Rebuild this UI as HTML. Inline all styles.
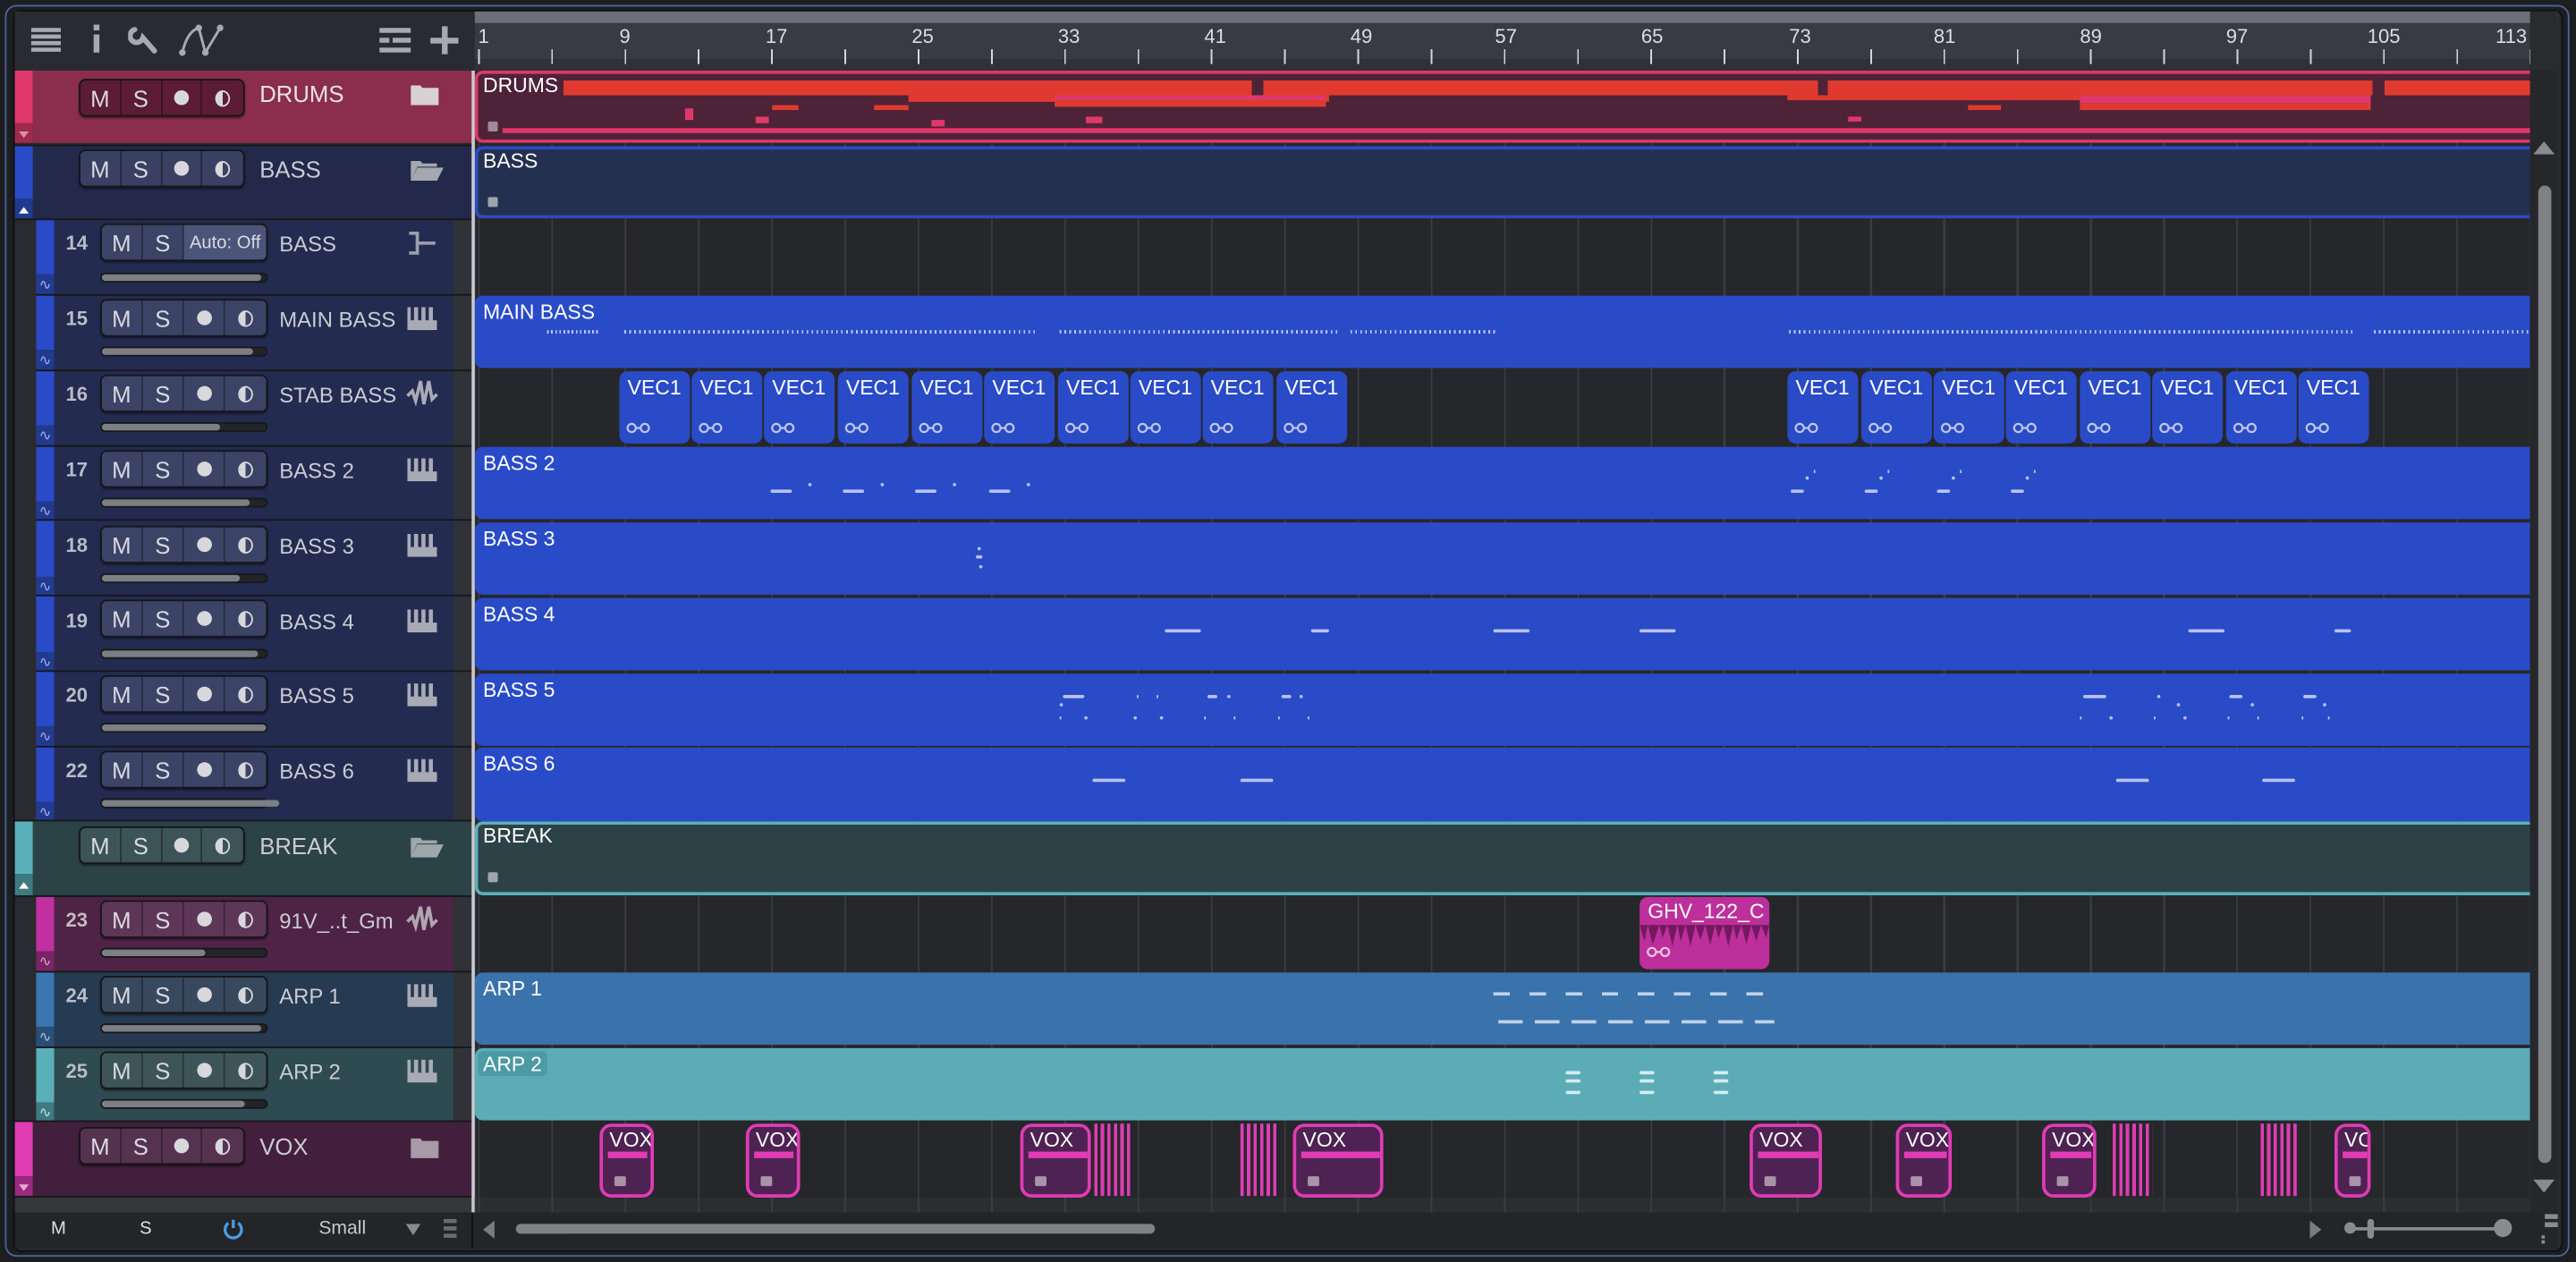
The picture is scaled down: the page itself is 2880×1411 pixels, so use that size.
<!DOCTYPE html>
<html><head><meta charset="utf-8">
<style>
*{box-sizing:border-box;margin:0;padding:0}
html,body{width:2880px;height:1410px;overflow:hidden;background:#1d1e21}
#root{position:absolute;left:0;top:0;width:1568px;height:768px;transform:scale(1.83674);transform-origin:0 0;font-family:"Liberation Sans",Arial,sans-serif;background:#1d1e21;overflow:hidden}
.a{position:absolute}
.frame{left:3px;top:3px;width:1561px;height:762px;border:1.5px solid #4a6796;border-radius:7px}
.panel{left:8px;top:6px;width:1552px;height:756px;background:#2a2b2f;border:1px solid #0e0f11;border-radius:5px}
.txt{color:#c9ccd3;white-space:nowrap}
.cn{font-size:13px!important}
.bg{position:absolute;height:23px;border:1px solid #15161a;border-radius:4px;display:flex;overflow:hidden;box-shadow:0 1px 1px rgba(0,0,0,.4)}
.bg i{font-style:normal;width:25px;height:100%;display:flex;align-items:center;justify-content:center;color:#d8dae0;font-size:14px;border-right:1px solid rgba(0,0,0,.35)}
.bg i:last-child{border-right:none}
.rec{width:9px;height:9px;border-radius:50%;background:#d8d8dc}
.mon{width:9px;height:10px;border-radius:50%;background:linear-gradient(90deg,#d8d8dc 50%,transparent 50%);border:1.2px solid #d8d8dc}
.fad{position:absolute;height:6px;width:102px;background:#222428;border-radius:3px;border:1px solid #17181b}
.fad b{display:block;height:100%;background:#7c8085;border-radius:3px}
.clip{position:absolute;border-radius:5px;overflow:hidden}
.ct{position:absolute;left:5px;top:3px;color:#fff;font-size:12.5px;white-space:nowrap}
.n{position:absolute;background:#b8c2ec;height:2px;border-radius:1px}
.grid{left:289px;top:43px;width:1251px;height:695px;background-color:#26272b;background-image:repeating-linear-gradient(90deg,#3b3c41 0 1px,transparent 1px 44.6px);background-position:2px 0}
.vec{position:absolute;width:43px;height:44px;background:#2a4bc8;border-radius:5px}
.vec span{position:absolute;left:5px;top:3px;color:#fff;font-size:12.5px}
.vec svg{position:absolute;left:4px;top:31px}
.vox{position:absolute;height:45px;border:2px solid #e03cb4;border-radius:7px;background:#4e2252;overflow:hidden}
.vox span{position:absolute;left:4px;top:1px;color:#fff;font-size:12.5px}
.vox em{position:absolute;left:3px;top:15px;height:4px;background:#e03cb4}
.vox u{position:absolute;left:7px;bottom:5px;width:7px;height:6px;background:#a893a8;border-radius:1px}
.str{position:absolute;height:44px;background:repeating-linear-gradient(90deg,#e03cb4 0 2px,transparent 2px 4px)}
</style></head><body><div id="root">
<div class="a frame"></div>
<div class="a panel"></div>

<!-- toolbar -->
<div class="a" style="left:9px;top:7px;width:278px;height:36px;background:#2a2b30"></div>
<svg class="a" style="left:18px;top:16px" width="22" height="16"><g fill="#a8a9ae"><rect x="1" y="1" width="18" height="2.5"/><rect x="1" y="5" width="18" height="2.5"/><rect x="1" y="9" width="18" height="2.5"/><rect x="1" y="13" width="18" height="2.5"/></g></svg>
<svg class="a" style="left:54px;top:13px" width="10" height="20"><g fill="#a8a9ae"><rect x="3" y="2" width="3.5" height="3.5"/><rect x="3" y="8" width="3.5" height="11"/></g></svg>
<svg class="a" style="left:78px;top:14px" width="22" height="20"><path d="M4 4 a4 4 0 1 0 5 5 L16 17" stroke="#a8a9ae" stroke-width="3.2" fill="none" stroke-linecap="round"/></svg>
<svg class="a" style="left:108px;top:13px" width="30" height="22"><path d="M3 19 Q6 6 13 4 L17 19 L26 4" stroke="#a8a9ae" stroke-width="1.6" fill="none"/><g fill="#a8a9ae"><circle cx="3" cy="19" r="2"/><circle cx="13" cy="4" r="2"/><circle cx="17" cy="19" r="2"/><circle cx="26" cy="4" r="2"/></g></svg>
<svg class="a" style="left:230px;top:16px" width="22" height="16"><g fill="#a8a9ae"><rect x="1" y="1" width="19" height="3"/><rect x="1" y="7" width="6" height="3"/><rect x="9" y="7" width="11" height="3"/><rect x="1" y="13" width="19" height="3"/></g></svg>
<svg class="a" style="left:261px;top:15px" width="20" height="20"><g fill="#a8a9ae"><rect x="8" y="1" width="3.5" height="17"/><rect x="1" y="8" width="17" height="3.5"/></g></svg>

<!-- ruler -->
<div class="a" style="left:289px;top:7px;width:1251px;height:36px;background:#393b43"></div>
<div class="a" style="left:289px;top:7px;width:1268px;height:7px;background:#6c6f77"></div>
<div class="a" style="left:289px;top:36px;width:1251px;height:7px;background:#2f3137"></div>
<div class="a" style="left:291px;top:30px;width:1251px;height:9px;background-image:repeating-linear-gradient(90deg,#d5d6da 0 1px,transparent 1px 44.6px);background-position:0 0"></div>
<div class="a txt" style="left:0;top:15px;font-size:12px;color:#dcdde0;width:1568px;height:16px">
<span class="a" style="left:291px">1</span><span class="a" style="left:377px">9</span><span class="a" style="left:466px">17</span><span class="a" style="left:555px">25</span><span class="a" style="left:644px">33</span><span class="a" style="left:733px">41</span><span class="a" style="left:822px">49</span><span class="a" style="left:910px">57</span><span class="a" style="left:999px">65</span><span class="a" style="left:1089px">73</span><span class="a" style="left:1177px">81</span><span class="a" style="left:1266px">89</span><span class="a" style="left:1355px">97</span><span class="a" style="left:1441px">105</span><span class="a" style="left:1519px">113</span></div>
<div class="a" style="left:1540px;top:7px;width:17px;height:36px;background:#2a2b2f"></div>

<!-- header column base -->
<div class="a" style="left:9px;top:43px;width:279px;height:695px;background:#2a2b30"></div>
<div class="a grid"></div>
<div class="a" style="left:287px;top:43px;width:2px;height:695px;background:#c9cbd0"></div>

<!-- ROW 0 DRUMS folder -->
<div class="a" style="left:9px;top:43px;width:11px;height:32px;background:#e0386a"></div>
<div class="a" style="left:9px;top:75px;width:11px;height:12px;background:#9e2a4d"><svg width="11" height="12"><path d="M2.5 4 h6 l-3 4z" fill="#d890a8"/></svg></div>
<div class="a" style="left:20px;top:43px;width:267px;height:44px;background:#8b2d4c"></div>
<div class="bg" style="left:48px;top:48px;width:101px;background:#5b1c34"><i>M</i><i>S</i><i><b class="rec"></b></i><i><b class="mon"></b></i></div>
<div class="a txt" style="left:158px;top:49px;font-size:14px;color:#e8e3e6">DRUMS</div>
<svg class="a" style="left:250px;top:51px" width="17" height="13"><path d="M0 1 h6 l1 1.5 h10 v11 h-17z" fill="#d8d0d4"/></svg>
<div class="clip" style="left:289px;top:43px;width:1251px;height:44px;background:#4e2338;border:2px solid #e0386a;border-right:none;border-radius:5px 0 0 5px"></div>
<div class="a ct" style="left:294px;top:45px">DRUMS</div>
<div class="a" style="left:343px;top:49px;width:1197px;height:9px;background:linear-gradient(90deg,#e03a30 0 35%,#4e2338 35% 35.6%,#e03a30 35.6% 63.8%,#4e2338 63.8% 64.3%,#e03a30 64.3% 92%,#4e2338 92% 92.6%,#e03a30 92.6%)"></div>
<div class="a" style="left:553px;top:58px;width:256px;height:4px;background:#e03a30"></div>
<div class="a" style="left:642px;top:58px;width:165px;height:3px;background:#e0386a"></div>
<div class="a" style="left:642px;top:61px;width:165px;height:4px;background:#e03a30"></div>
<div class="a" style="left:1088px;top:58px;width:178px;height:3px;background:#e03a30"></div>
<div class="a" style="left:1266px;top:58px;width:177px;height:5px;background:#e0386a"></div>
<div class="a" style="left:1266px;top:63px;width:177px;height:4px;background:#e03a30"></div>
<div class="a" style="left:470px;top:64px;width:16px;height:3px;background:#e03a30"></div>
<div class="a" style="left:532px;top:64px;width:21px;height:3px;background:#e03a30"></div>
<div class="a" style="left:1198px;top:64px;width:20px;height:3px;background:#e03a30"></div>
<div class="a" style="left:417px;top:66px;width:5px;height:7px;background:#e0386a"></div>
<div class="a" style="left:460px;top:71px;width:8px;height:4px;background:#e0386a"></div>
<div class="a" style="left:567px;top:73px;width:8px;height:4px;background:#e0386a"></div>
<div class="a" style="left:661px;top:71px;width:10px;height:4px;background:#e0386a"></div>
<div class="a" style="left:1125px;top:71px;width:8px;height:3px;background:#e0386a"></div>
<div class="a" style="left:306px;top:78px;width:1234px;height:3px;background:#e0386a"></div>
<div class="a" style="left:297px;top:74px;width:6px;height:6px;background:#a08a95;border-radius:1px"></div>

<!-- ROW 1 BASS folder -->
<div class="a" style="left:9px;top:89px;width:11px;height:32px;background:#2a4bc8"></div>
<div class="a" style="left:9px;top:121px;width:11px;height:12px;background:#223a8e"><svg width="11" height="12"><path d="M2.5 8 h6 l-3 -4z" fill="#fff"/></svg></div>
<div class="a" style="left:20px;top:89px;width:267px;height:44px;background:#22294b"></div>
<div class="bg" style="left:48px;top:91px;width:101px;background:#394061"><i>M</i><i>S</i><i><b class="rec"></b></i><i><b class="mon"></b></i></div>
<div class="a txt" style="left:158px;top:95px;font-size:14px">BASS</div>
<svg class="a" style="left:250px;top:97px" width="20" height="13"><path d="M0 1 h6 l1 1.5 h9 v2 h-12 l-4 8.5z M4 5 h16 l-4 8 h-16z" fill="#a5a8b0"/></svg>
<div class="clip" style="left:289px;top:89px;width:1251px;height:44px;background:#24304f;border:2px solid #2a4bc8;border-right:none;border-radius:5px 0 0 5px"></div>
<div class="a ct" style="left:294px;top:91px">BASS</div>
<div class="a" style="left:297px;top:120px;width:6px;height:6px;background:#9fa3ad;border-radius:1px"></div>

<!-- ROW 2 (14 BASS) -->
<div class="a" style="left:22px;top:134px;width:11px;height:33px;background:#2a4bc8"></div>
<div class="a" style="left:22px;top:167px;width:11px;height:12px;background:#223a8e;color:#9fb0f0;font-size:9px;line-height:12px;text-align:center">∿</div>
<div class="a" style="left:33px;top:134px;width:243px;height:45px;background:#232b50"></div>
<div class="a" style="left:276px;top:134px;width:11px;height:45px;background:#303237"></div>
<div class="a txt" style="left:40px;top:141px;font-size:12px;font-weight:bold;color:#b9bcc7">14</div>
<div class="bg" style="left:61px;top:136px;width:102px;background:#3b4466"><i>M</i><i>S</i><i style="width:50px;background:#4b5479;font-size:11px">Auto: Off</i></div>
<div class="a txt cn" style="left:170px;top:141px">BASS</div>
<svg class="a" style="left:248px;top:140px" width="18" height="16"><g fill="#9a9dab"><rect x="1" y="1" width="6" height="2"/><rect x="1" y="13" width="6" height="2"/><rect x="5" y="1" width="2" height="14"/><rect x="5" y="7" width="12" height="2"/></g></svg>
<div class="fad" style="left:61px;top:166px"><b style="width:97px"></b></div>

<!-- ROW 3 (15 MAIN BASS) -->
<div class="a" style="left:22px;top:180px;width:11px;height:33px;background:#2a4bc8"></div>
<div class="a" style="left:22px;top:213px;width:11px;height:12px;background:#223a8e;color:#9fb0f0;font-size:9px;line-height:12px;text-align:center">∿</div>
<div class="a" style="left:33px;top:180px;width:243px;height:45px;background:#232b50"></div>
<div class="a" style="left:276px;top:180px;width:11px;height:45px;background:#303237"></div>
<div class="a txt" style="left:40px;top:187px;font-size:12px;font-weight:bold;color:#b9bcc7">15</div>
<div class="bg" style="left:61px;top:182px;width:102px;background:#3b4466"><i>M</i><i>S</i><i><b class="rec"></b></i><i><b class="mon"></b></i></div>
<div class="a txt cn" style="left:170px;top:187px">MAIN BASS</div>
<svg class="a" style="left:248px;top:187px" width="18" height="14"><path d="M0 0 h2 v8 h2 v-8 h2.5 v8 h2 v-8 h2.5 v8 h2 v-8 h2.5 v8 h2.5 v-8 h0 v14 h-18z" fill="#a8abb5"/></svg>
<div class="fad" style="left:61px;top:211px"><b style="width:92px"></b></div>
<div class="clip" style="left:289px;top:180px;width:1251px;height:44px;background:#2a4bc8;border-radius:5px 0 0 5px"><div class="ct">MAIN BASS</div></div>
<div class="a" style="left:333px;top:201px;height:2px;width:32px;background:repeating-linear-gradient(90deg,#c6cff0 0 1px,transparent 1px 2.5px)"></div>
<div class="a" style="left:380px;top:201px;height:2px;width:252px;background:repeating-linear-gradient(90deg,#c6cff0 0 1px,transparent 1px 3px)"></div>
<div class="a" style="left:645px;top:201px;height:2px;width:170px;background:repeating-linear-gradient(90deg,#c6cff0 0 1px,transparent 1px 3px)"></div>
<div class="a" style="left:822px;top:201px;height:2px;width:88px;background:repeating-linear-gradient(90deg,#c6cff0 0 1px,transparent 1px 3px)"></div>
<div class="a" style="left:1089px;top:201px;height:2px;width:344px;background:repeating-linear-gradient(90deg,#c6cff0 0 1px,transparent 1px 3px)"></div>
<div class="a" style="left:1445px;top:201px;height:2px;width:95px;background:repeating-linear-gradient(90deg,#c6cff0 0 1px,transparent 1px 3px)"></div>

<!-- ROW 4 (16 STAB BASS) -->
<div class="a" style="left:22px;top:226px;width:11px;height:33px;background:#2a4bc8"></div>
<div class="a" style="left:22px;top:259px;width:11px;height:12px;background:#223a8e;color:#9fb0f0;font-size:9px;line-height:12px;text-align:center">∿</div>
<div class="a" style="left:33px;top:226px;width:243px;height:45px;background:#232b50"></div>
<div class="a" style="left:276px;top:226px;width:11px;height:45px;background:#303237"></div>
<div class="a txt" style="left:40px;top:233px;font-size:12px;font-weight:bold;color:#b9bcc7">16</div>
<div class="bg" style="left:61px;top:228px;width:102px;background:#3b4466"><i>M</i><i>S</i><i><b class="rec"></b></i><i><b class="mon"></b></i></div>
<div class="a txt cn" style="left:170px;top:233px">STAB BASS</div>
<svg class="a" style="left:247px;top:230px" width="20" height="18"><path d="M1 11 L4 8 L6 14 L9 2 L11 16 L14 2 L16 13 L19 10" stroke="#a8abb5" stroke-width="2" fill="none"/></svg>
<div class="fad" style="left:61px;top:257px"><b style="width:72px"></b></div>
<div class="vec" style="left:377px;top:226px"><span>VEC1</span><svg width="16" height="7"><g stroke="#bfc7e8" stroke-width="1.2" fill="none"><circle cx="3.5" cy="3.5" r="2.5"/><circle cx="11.5" cy="3.5" r="2.5"/><path d="M6 3.5h3"/></g></svg></div>
<div class="vec" style="left:421px;top:226px"><span>VEC1</span><svg width="16" height="7"><g stroke="#bfc7e8" stroke-width="1.2" fill="none"><circle cx="3.5" cy="3.5" r="2.5"/><circle cx="11.5" cy="3.5" r="2.5"/><path d="M6 3.5h3"/></g></svg></div>
<div class="vec" style="left:465px;top:226px"><span>VEC1</span><svg width="16" height="7"><g stroke="#bfc7e8" stroke-width="1.2" fill="none"><circle cx="3.5" cy="3.5" r="2.5"/><circle cx="11.5" cy="3.5" r="2.5"/><path d="M6 3.5h3"/></g></svg></div>
<div class="vec" style="left:510px;top:226px"><span>VEC1</span><svg width="16" height="7"><g stroke="#bfc7e8" stroke-width="1.2" fill="none"><circle cx="3.5" cy="3.5" r="2.5"/><circle cx="11.5" cy="3.5" r="2.5"/><path d="M6 3.5h3"/></g></svg></div>
<div class="vec" style="left:555px;top:226px"><span>VEC1</span><svg width="16" height="7"><g stroke="#bfc7e8" stroke-width="1.2" fill="none"><circle cx="3.5" cy="3.5" r="2.5"/><circle cx="11.5" cy="3.5" r="2.5"/><path d="M6 3.5h3"/></g></svg></div>
<div class="vec" style="left:599px;top:226px"><span>VEC1</span><svg width="16" height="7"><g stroke="#bfc7e8" stroke-width="1.2" fill="none"><circle cx="3.5" cy="3.5" r="2.5"/><circle cx="11.5" cy="3.5" r="2.5"/><path d="M6 3.5h3"/></g></svg></div>
<div class="vec" style="left:644px;top:226px"><span>VEC1</span><svg width="16" height="7"><g stroke="#bfc7e8" stroke-width="1.2" fill="none"><circle cx="3.5" cy="3.5" r="2.5"/><circle cx="11.5" cy="3.5" r="2.5"/><path d="M6 3.5h3"/></g></svg></div>
<div class="vec" style="left:688px;top:226px"><span>VEC1</span><svg width="16" height="7"><g stroke="#bfc7e8" stroke-width="1.2" fill="none"><circle cx="3.5" cy="3.5" r="2.5"/><circle cx="11.5" cy="3.5" r="2.5"/><path d="M6 3.5h3"/></g></svg></div>
<div class="vec" style="left:732px;top:226px"><span>VEC1</span><svg width="16" height="7"><g stroke="#bfc7e8" stroke-width="1.2" fill="none"><circle cx="3.5" cy="3.5" r="2.5"/><circle cx="11.5" cy="3.5" r="2.5"/><path d="M6 3.5h3"/></g></svg></div>
<div class="vec" style="left:777px;top:226px"><span>VEC1</span><svg width="16" height="7"><g stroke="#bfc7e8" stroke-width="1.2" fill="none"><circle cx="3.5" cy="3.5" r="2.5"/><circle cx="11.5" cy="3.5" r="2.5"/><path d="M6 3.5h3"/></g></svg></div>
<div class="vec" style="left:1088px;top:226px"><span>VEC1</span><svg width="16" height="7"><g stroke="#bfc7e8" stroke-width="1.2" fill="none"><circle cx="3.5" cy="3.5" r="2.5"/><circle cx="11.5" cy="3.5" r="2.5"/><path d="M6 3.5h3"/></g></svg></div>
<div class="vec" style="left:1133px;top:226px"><span>VEC1</span><svg width="16" height="7"><g stroke="#bfc7e8" stroke-width="1.2" fill="none"><circle cx="3.5" cy="3.5" r="2.5"/><circle cx="11.5" cy="3.5" r="2.5"/><path d="M6 3.5h3"/></g></svg></div>
<div class="vec" style="left:1177px;top:226px"><span>VEC1</span><svg width="16" height="7"><g stroke="#bfc7e8" stroke-width="1.2" fill="none"><circle cx="3.5" cy="3.5" r="2.5"/><circle cx="11.5" cy="3.5" r="2.5"/><path d="M6 3.5h3"/></g></svg></div>
<div class="vec" style="left:1221px;top:226px"><span>VEC1</span><svg width="16" height="7"><g stroke="#bfc7e8" stroke-width="1.2" fill="none"><circle cx="3.5" cy="3.5" r="2.5"/><circle cx="11.5" cy="3.5" r="2.5"/><path d="M6 3.5h3"/></g></svg></div>
<div class="vec" style="left:1266px;top:226px"><span>VEC1</span><svg width="16" height="7"><g stroke="#bfc7e8" stroke-width="1.2" fill="none"><circle cx="3.5" cy="3.5" r="2.5"/><circle cx="11.5" cy="3.5" r="2.5"/><path d="M6 3.5h3"/></g></svg></div>
<div class="vec" style="left:1310px;top:226px"><span>VEC1</span><svg width="16" height="7"><g stroke="#bfc7e8" stroke-width="1.2" fill="none"><circle cx="3.5" cy="3.5" r="2.5"/><circle cx="11.5" cy="3.5" r="2.5"/><path d="M6 3.5h3"/></g></svg></div>
<div class="vec" style="left:1355px;top:226px"><span>VEC1</span><svg width="16" height="7"><g stroke="#bfc7e8" stroke-width="1.2" fill="none"><circle cx="3.5" cy="3.5" r="2.5"/><circle cx="11.5" cy="3.5" r="2.5"/><path d="M6 3.5h3"/></g></svg></div>
<div class="vec" style="left:1399px;top:226px"><span>VEC1</span><svg width="16" height="7"><g stroke="#bfc7e8" stroke-width="1.2" fill="none"><circle cx="3.5" cy="3.5" r="2.5"/><circle cx="11.5" cy="3.5" r="2.5"/><path d="M6 3.5h3"/></g></svg></div>

<!-- ROWS 5-9 (BASS 2..6) -->
<div class="a" style="left:22px;top:272px;width:11px;height:228px;background:#2a4bc8"></div>
<div class="a" style="left:22px;top:305px;width:11px;height:12px;background:#223a8e;color:#9fb0f0;font-size:9px;line-height:12px;text-align:center">∿</div>
<div class="a" style="left:22px;top:351px;width:11px;height:12px;background:#223a8e;color:#9fb0f0;font-size:9px;line-height:12px;text-align:center">∿</div>
<div class="a" style="left:22px;top:397px;width:11px;height:12px;background:#223a8e;color:#9fb0f0;font-size:9px;line-height:12px;text-align:center">∿</div>
<div class="a" style="left:22px;top:442px;width:11px;height:12px;background:#223a8e;color:#9fb0f0;font-size:9px;line-height:12px;text-align:center">∿</div>
<div class="a" style="left:22px;top:488px;width:11px;height:12px;background:#223a8e;color:#9fb0f0;font-size:9px;line-height:12px;text-align:center">∿</div>
<div class="a" style="left:33px;top:272px;width:243px;height:228px;background:#232b50"></div>
<div class="a" style="left:276px;top:272px;width:11px;height:228px;background:#303237"></div>
<div class="a" style="left:22px;top:316px;width:265px;height:1px;background:#16171a"></div>
<div class="a" style="left:22px;top:362px;width:265px;height:1px;background:#16171a"></div>
<div class="a" style="left:22px;top:408px;width:265px;height:1px;background:#16171a"></div>
<div class="a" style="left:22px;top:454px;width:265px;height:1px;background:#16171a"></div>

<div class="a txt" style="left:40px;top:279px;font-size:12px;font-weight:bold;color:#b9bcc7">17</div>
<div class="bg" style="left:61px;top:274px;width:102px;background:#3b4466"><i>M</i><i>S</i><i><b class="rec"></b></i><i><b class="mon"></b></i></div>
<div class="a txt cn" style="left:170px;top:279px">BASS 2</div>
<div class="fad" style="left:61px;top:303px"><b style="width:90px"></b></div>

<div class="a txt" style="left:40px;top:325px;font-size:12px;font-weight:bold;color:#b9bcc7">18</div>
<div class="bg" style="left:61px;top:320px;width:102px;background:#3b4466"><i>M</i><i>S</i><i><b class="rec"></b></i><i><b class="mon"></b></i></div>
<div class="a txt cn" style="left:170px;top:325px">BASS 3</div>
<div class="fad" style="left:61px;top:349px"><b style="width:84px"></b></div>

<div class="a txt" style="left:40px;top:371px;font-size:12px;font-weight:bold;color:#b9bcc7">19</div>
<div class="bg" style="left:61px;top:365px;width:102px;background:#3b4466"><i>M</i><i>S</i><i><b class="rec"></b></i><i><b class="mon"></b></i></div>
<div class="a txt cn" style="left:170px;top:371px">BASS 4</div>
<div class="fad" style="left:61px;top:395px"><b style="width:95px"></b></div>

<div class="a txt" style="left:40px;top:416px;font-size:12px;font-weight:bold;color:#b9bcc7">20</div>
<div class="bg" style="left:61px;top:411px;width:102px;background:#3b4466"><i>M</i><i>S</i><i><b class="rec"></b></i><i><b class="mon"></b></i></div>
<div class="a txt cn" style="left:170px;top:416px">BASS 5</div>
<div class="fad" style="left:61px;top:440px"><b style="width:100px"></b></div>

<div class="a txt" style="left:40px;top:462px;font-size:12px;font-weight:bold;color:#b9bcc7">22</div>
<div class="bg" style="left:61px;top:457px;width:102px;background:#3b4466"><i>M</i><i>S</i><i><b class="rec"></b></i><i><b class="mon"></b></i></div>
<div class="a txt cn" style="left:170px;top:462px">BASS 6</div>
<div class="fad" style="left:61px;top:486px"><b style="width:108px"></b></div>

<svg class="a" style="left:248px;top:279px" width="18" height="14"><path d="M0 0 h2 v8 h2 v-8 h2.5 v8 h2 v-8 h2.5 v8 h2 v-8 h2.5 v8 h2.5 v-8 v14 h-18z" fill="#a8abb5"/></svg>
<svg class="a" style="left:248px;top:325px" width="18" height="14"><path d="M0 0 h2 v8 h2 v-8 h2.5 v8 h2 v-8 h2.5 v8 h2 v-8 h2.5 v8 h2.5 v-8 v14 h-18z" fill="#a8abb5"/></svg>
<svg class="a" style="left:248px;top:371px" width="18" height="14"><path d="M0 0 h2 v8 h2 v-8 h2.5 v8 h2 v-8 h2.5 v8 h2 v-8 h2.5 v8 h2.5 v-8 v14 h-18z" fill="#a8abb5"/></svg>
<svg class="a" style="left:248px;top:416px" width="18" height="14"><path d="M0 0 h2 v8 h2 v-8 h2.5 v8 h2 v-8 h2.5 v8 h2 v-8 h2.5 v8 h2.5 v-8 v14 h-18z" fill="#a8abb5"/></svg>
<svg class="a" style="left:248px;top:462px" width="18" height="14"><path d="M0 0 h2 v8 h2 v-8 h2.5 v8 h2 v-8 h2.5 v8 h2 v-8 h2.5 v8 h2.5 v-8 v14 h-18z" fill="#a8abb5"/></svg>

<div class="clip" style="left:289px;top:272px;width:1251px;height:44px;background:#2a4bc8;border-radius:5px 0 0 5px"><div class="ct">BASS 2</div></div>
<div class="clip" style="left:289px;top:318px;width:1251px;height:44px;background:#2a4bc8;border-radius:5px 0 0 5px"><div class="ct">BASS 3</div></div>
<div class="clip" style="left:289px;top:364px;width:1251px;height:44px;background:#2a4bc8;border-radius:5px 0 0 5px"><div class="ct">BASS 4</div></div>
<div class="clip" style="left:289px;top:410px;width:1251px;height:44px;background:#2a4bc8;border-radius:5px 0 0 5px"><div class="ct">BASS 5</div></div>
<div class="clip" style="left:289px;top:455px;width:1251px;height:45px;background:#2a4bc8;border-radius:5px 0 0 5px"><div class="ct">BASS 6</div></div>
<!-- notes -->
<div class="n" style="left:469px;top:298px;width:13px"></div><div class="n" style="left:492px;top:294px;width:2px"></div>
<div class="n" style="left:513px;top:298px;width:13px"></div><div class="n" style="left:536px;top:294px;width:2px"></div>
<div class="n" style="left:557px;top:298px;width:13px"></div><div class="n" style="left:580px;top:294px;width:2px"></div>
<div class="n" style="left:602px;top:298px;width:13px"></div><div class="n" style="left:625px;top:294px;width:2px"></div>
<div class="n" style="left:1090px;top:298px;width:8px"></div><div class="n" style="left:1099px;top:290px;width:2px"></div><div class="n" style="left:1104px;top:286px;width:1px"></div>
<div class="n" style="left:1135px;top:298px;width:8px"></div><div class="n" style="left:1144px;top:290px;width:2px"></div><div class="n" style="left:1149px;top:286px;width:1px"></div>
<div class="n" style="left:1179px;top:298px;width:8px"></div><div class="n" style="left:1188px;top:290px;width:2px"></div><div class="n" style="left:1193px;top:286px;width:1px"></div>
<div class="n" style="left:1224px;top:298px;width:8px"></div><div class="n" style="left:1233px;top:290px;width:2px"></div><div class="n" style="left:1238px;top:286px;width:1px"></div>
<div class="n" style="left:595px;top:333px;width:2px"></div><div class="n" style="left:594px;top:338px;width:4px"></div><div class="n" style="left:596px;top:344px;width:2px"></div>
<div class="n" style="left:709px;top:383px;width:22px"></div><div class="n" style="left:798px;top:383px;width:11px"></div><div class="n" style="left:909px;top:383px;width:22px"></div><div class="n" style="left:998px;top:383px;width:22px"></div><div class="n" style="left:1332px;top:383px;width:22px"></div><div class="n" style="left:1421px;top:383px;width:10px"></div>
<div class="n" style="left:647px;top:423px;width:13px"></div><div class="n" style="left:645px;top:428px;width:2px"></div><div class="n" style="left:645px;top:436px;width:1px"></div><div class="n" style="left:660px;top:436px;width:2px"></div>
<div class="n" style="left:692px;top:423px;width:1px"></div><div class="n" style="left:704px;top:423px;width:1px"></div><div class="n" style="left:690px;top:436px;width:2px"></div><div class="n" style="left:706px;top:436px;width:2px"></div>
<div class="n" style="left:735px;top:423px;width:6px"></div><div class="n" style="left:747px;top:423px;width:2px"></div><div class="n" style="left:733px;top:436px;width:1px"></div><div class="n" style="left:751px;top:436px;width:1px"></div>
<div class="n" style="left:780px;top:423px;width:6px"></div><div class="n" style="left:791px;top:423px;width:2px"></div><div class="n" style="left:778px;top:436px;width:1px"></div><div class="n" style="left:796px;top:436px;width:1px"></div>
<div class="n" style="left:1268px;top:423px;width:14px"></div><div class="n" style="left:1266px;top:436px;width:1px"></div><div class="n" style="left:1284px;top:436px;width:2px"></div>
<div class="n" style="left:1313px;top:423px;width:2px"></div><div class="n" style="left:1325px;top:428px;width:2px"></div><div class="n" style="left:1311px;top:436px;width:1px"></div><div class="n" style="left:1329px;top:436px;width:2px"></div>
<div class="n" style="left:1357px;top:423px;width:8px"></div><div class="n" style="left:1370px;top:428px;width:2px"></div><div class="n" style="left:1356px;top:436px;width:1px"></div><div class="n" style="left:1374px;top:436px;width:1px"></div>
<div class="n" style="left:1402px;top:423px;width:8px"></div><div class="n" style="left:1414px;top:428px;width:2px"></div><div class="n" style="left:1401px;top:436px;width:1px"></div><div class="n" style="left:1417px;top:436px;width:1px"></div>
<div class="n" style="left:665px;top:474px;width:20px"></div><div class="n" style="left:755px;top:474px;width:20px"></div><div class="n" style="left:1288px;top:474px;width:20px"></div><div class="n" style="left:1377px;top:474px;width:20px"></div>

<!-- ROW 10 BREAK folder -->
<div class="a" style="left:9px;top:500px;width:11px;height:32px;background:#5ab0b9"></div>
<div class="a" style="left:9px;top:532px;width:11px;height:13px;background:#3e7a80"><svg width="11" height="12"><path d="M2.5 8 h6 l-3 -4z" fill="#fff"/></svg></div>
<div class="a" style="left:20px;top:500px;width:267px;height:45px;background:#2b4246"></div>
<div class="bg" style="left:48px;top:503px;width:101px;background:#3c5357"><i>M</i><i>S</i><i><b class="rec"></b></i><i><b class="mon"></b></i></div>
<div class="a txt" style="left:158px;top:507px;font-size:14px">BREAK</div>
<svg class="a" style="left:250px;top:509px" width="20" height="13"><path d="M0 1 h6 l1 1.5 h9 v2 h-12 l-4 8.5z M4 5 h16 l-4 8 h-16z" fill="#9ea7a9"/></svg>
<div class="clip" style="left:289px;top:500px;width:1251px;height:45px;background:#2c4246;border:2px solid #5ab0b9;border-right:none;border-radius:5px 0 0 5px"></div>
<div class="a ct" style="left:294px;top:502px">BREAK</div>
<div class="a" style="left:297px;top:531px;width:6px;height:6px;background:#9fa7a9;border-radius:1px"></div>

<!-- ROW 11 (23) -->
<div class="a" style="left:22px;top:546px;width:11px;height:33px;background:#c030a0"></div>
<div class="a" style="left:22px;top:579px;width:11px;height:12px;background:#7a2468;color:#d8a0d0;font-size:9px;line-height:12px;text-align:center">∿</div>
<div class="a" style="left:33px;top:546px;width:243px;height:45px;background:#4f2346"></div>
<div class="a" style="left:276px;top:546px;width:11px;height:45px;background:#303237"></div>
<div class="a txt" style="left:40px;top:553px;font-size:12px;font-weight:bold;color:#c3bac3">23</div>
<div class="bg" style="left:61px;top:548px;width:102px;background:#5e3658"><i>M</i><i>S</i><i><b class="rec"></b></i><i><b class="mon"></b></i></div>
<div class="a txt cn" style="left:170px;top:553px">91V_..t_Gm</div>
<svg class="a" style="left:247px;top:550px" width="20" height="18"><path d="M1 11 L4 8 L6 14 L9 2 L11 16 L14 2 L16 13 L19 10" stroke="#b0a6b0" stroke-width="2" fill="none"/></svg>
<div class="fad" style="left:61px;top:577px"><b style="width:63px"></b></div>
<div class="clip" style="left:998px;top:546px;width:79px;height:44px;background:#bd2f9b;border-radius:5px">
<div class="ct" style="top:2px">GHV_122_C</div>
<svg class="a" style="left:0;top:17px" width="79" height="14"><path d="M0 0 L3 10 L5 0 L8 12 L12 0 L14 8 L17 0 L20 13 L23 0 L25 10 L28 0 L31 13 L34 0 L37 9 L40 0 L43 12 L46 0 L48 8 L51 0 L54 13 L57 0 L59 9 L62 0 L65 12 L68 0 L71 10 L74 0 L77 8 L79 0z" fill="#74195f"/></svg>
<svg class="a" style="left:4px;top:30px" width="16" height="7"><g stroke="#e8c8e0" stroke-width="1.2" fill="none"><circle cx="3.5" cy="3.5" r="2.5"/><circle cx="11.5" cy="3.5" r="2.5"/><path d="M6 3.5h3"/></g></svg></div>

<!-- ROW 12 (24 ARP 1) -->
<div class="a" style="left:22px;top:592px;width:11px;height:33px;background:#3a76b0"></div>
<div class="a" style="left:22px;top:625px;width:11px;height:12px;background:#284f78;color:#a8c4e0;font-size:9px;line-height:12px;text-align:center">∿</div>
<div class="a" style="left:33px;top:592px;width:243px;height:45px;background:#263a52"></div>
<div class="a" style="left:276px;top:592px;width:11px;height:45px;background:#303237"></div>
<div class="a txt" style="left:40px;top:599px;font-size:12px;font-weight:bold;color:#b9bcc7">24</div>
<div class="bg" style="left:61px;top:594px;width:102px;background:#38495e"><i>M</i><i>S</i><i><b class="rec"></b></i><i><b class="mon"></b></i></div>
<div class="a txt cn" style="left:170px;top:599px">ARP 1</div>
<svg class="a" style="left:248px;top:599px" width="18" height="14"><path d="M0 0 h2 v8 h2 v-8 h2.5 v8 h2 v-8 h2.5 v8 h2 v-8 h2.5 v8 h2.5 v-8 v14 h-18z" fill="#a8abb5"/></svg>
<div class="fad" style="left:61px;top:623px"><b style="width:97px"></b></div>
<div class="clip" style="left:289px;top:592px;width:1251px;height:44px;background:#3a73ab;border-radius:5px 0 0 5px"><div class="ct">ARP 1</div></div>
<div class="a" style="left:909px;top:604px;width:170px;height:2px;background:repeating-linear-gradient(90deg,#c0d2e8 0 10px,transparent 10px 22px)"></div>
<div class="a" style="left:912px;top:621px;width:168px;height:2px;background:repeating-linear-gradient(90deg,#c0d2e8 0 15px,transparent 15px 22.3px)"></div>

<!-- ROW 13 (25 ARP 2) -->
<div class="a" style="left:22px;top:638px;width:11px;height:33px;background:#5ab0b9"></div>
<div class="a" style="left:22px;top:671px;width:11px;height:12px;background:#3e7a80;color:#c0e0e4;font-size:9px;line-height:12px;text-align:center">∿</div>
<div class="a" style="left:33px;top:638px;width:243px;height:45px;background:#2d4b50"></div>
<div class="a" style="left:276px;top:638px;width:11px;height:45px;background:#303237"></div>
<div class="a txt" style="left:40px;top:645px;font-size:12px;font-weight:bold;color:#b9bcc7">25</div>
<div class="bg" style="left:61px;top:640px;width:102px;background:#3d5558"><i>M</i><i>S</i><i><b class="rec"></b></i><i><b class="mon"></b></i></div>
<div class="a txt cn" style="left:170px;top:645px">ARP 2</div>
<svg class="a" style="left:248px;top:645px" width="18" height="14"><path d="M0 0 h2 v8 h2 v-8 h2.5 v8 h2 v-8 h2.5 v8 h2 v-8 h2.5 v8 h2.5 v-8 v14 h-18z" fill="#a8abb5"/></svg>
<div class="fad" style="left:61px;top:669px"><b style="width:87px"></b></div>
<div class="clip" style="left:289px;top:638px;width:1251px;height:44px;background:#5bacb7;border-radius:5px 0 0 5px"><div class="a" style="left:2px;top:2px;width:42px;height:15px;background:#4b9aa4;border-radius:3px"></div><div class="ct">ARP 2</div></div>
<div class="n" style="left:953px;top:652px;width:9px;background:#d4ecee"></div><div class="n" style="left:953px;top:657px;width:9px;background:#d4ecee"></div><div class="n" style="left:953px;top:664px;width:9px;background:#d4ecee"></div>
<div class="n" style="left:998px;top:652px;width:9px;background:#d4ecee"></div><div class="n" style="left:998px;top:657px;width:9px;background:#d4ecee"></div><div class="n" style="left:998px;top:664px;width:9px;background:#d4ecee"></div>
<div class="n" style="left:1043px;top:652px;width:9px;background:#d4ecee"></div><div class="n" style="left:1043px;top:657px;width:9px;background:#d4ecee"></div><div class="n" style="left:1043px;top:664px;width:9px;background:#d4ecee"></div>

<!-- ROW 14 VOX folder -->
<div class="a" style="left:9px;top:683px;width:11px;height:33px;background:#e03cb4"></div>
<div class="a" style="left:9px;top:716px;width:11px;height:12px;background:#9a2a80"><svg width="11" height="12"><path d="M2.5 4 h6 l-3 4z" fill="#e4a8d8"/></svg></div>
<div class="a" style="left:20px;top:683px;width:267px;height:45px;background:#421f3c"></div>
<div class="bg" style="left:48px;top:686px;width:101px;background:#553350"><i>M</i><i>S</i><i><b class="rec"></b></i><i><b class="mon"></b></i></div>
<div class="a txt" style="left:158px;top:690px;font-size:14px">VOX</div>
<svg class="a" style="left:250px;top:692px" width="17" height="13"><path d="M0 1 h6 l1 1.5 h10 v11 h-17z" fill="#a89aa6"/></svg>
<div class="vox" style="left:365px;top:684px;width:33px"><span>VOX</span><em style="width:24px"></em><u></u></div>
<div class="vox" style="left:454px;top:684px;width:33px"><span>VOX</span><em style="width:24px"></em><u></u></div>
<div class="vox" style="left:621px;top:684px;width:43px"><span>VOX</span><em style="width:36px"></em><u></u></div>
<div class="str" style="left:666px;top:684px;width:22px"></div>
<div class="str" style="left:755px;top:684px;width:22px"></div>
<div class="vox" style="left:787px;top:684px;width:55px"><span>VOX</span><em style="width:48px"></em><u></u></div>
<div class="vox" style="left:1065px;top:684px;width:44px"><span>VOX</span><em style="width:37px"></em><u></u></div>
<div class="vox" style="left:1154px;top:684px;width:34px"><span>VOX</span><em style="width:26px"></em><u></u></div>
<div class="vox" style="left:1243px;top:684px;width:33px"><span>VOX</span><em style="width:25px"></em><u></u></div>
<div class="str" style="left:1286px;top:684px;width:24px"></div>
<div class="str" style="left:1376px;top:684px;width:22px"></div>
<div class="vox" style="left:1421px;top:684px;width:22px"><span>VO</span><em style="width:15px"></em><u></u></div>

<!-- row separators in header -->
<div class="a" style="left:9px;top:88px;width:278px;height:1px;background:#16171a"></div>
<div class="a" style="left:9px;top:133px;width:278px;height:1px;background:#16171a"></div>
<div class="a" style="left:22px;top:179px;width:265px;height:1px;background:#16171a"></div>
<div class="a" style="left:22px;top:225px;width:265px;height:1px;background:#16171a"></div>
<div class="a" style="left:22px;top:271px;width:265px;height:1px;background:#16171a"></div>
<div class="a" style="left:9px;top:499px;width:278px;height:1px;background:#16171a"></div>
<div class="a" style="left:9px;top:545px;width:278px;height:1px;background:#16171a"></div>
<div class="a" style="left:22px;top:591px;width:265px;height:1px;background:#16171a"></div>
<div class="a" style="left:22px;top:637px;width:265px;height:1px;background:#16171a"></div>
<div class="a" style="left:9px;top:682px;width:278px;height:1px;background:#16171a"></div>
<div class="a" style="left:9px;top:728px;width:278px;height:1px;background:#16171a"></div>

<!-- empty strip -->
<div class="a" style="left:9px;top:729px;width:278px;height:9px;background:#35373b"></div>
<div class="a" style="left:289px;top:729px;width:1251px;height:9px;background-color:#2b2e31;background-image:repeating-linear-gradient(90deg,#3b3c41 0 1px,transparent 1px 44.6px);background-position:2px 0"></div>

<!-- bottom bar -->
<div class="a" style="left:9px;top:738px;width:1548px;height:22px;background:#242528"></div>
<div class="a" style="left:287px;top:738px;width:1px;height:22px;background:#111"></div>
<div class="a txt" style="left:31px;top:742px;font-size:11px;color:#e0e0e0">M</div>
<div class="a txt" style="left:85px;top:742px;font-size:11px;color:#e0e0e0">S</div>
<svg class="a" style="left:135px;top:741px" width="14" height="14"><path d="M4 3.5 A5 5 0 1 0 10 3.5" stroke="#4a9ae8" stroke-width="1.8" fill="none"/><path d="M7 1.5 v5" stroke="#4a9ae8" stroke-width="1.8"/></svg>
<div class="a txt" style="left:194px;top:742px;font-size:11.5px;color:#c8c8c8">Small</div>
<svg class="a" style="left:247px;top:745px" width="10" height="7"><path d="M0 0 h9 l-4.5 7z" fill="#8a8b90"/></svg>
<svg class="a" style="left:270px;top:742px" width="8" height="14"><g fill="#6a6b70"><rect width="8" height="2.5"/><rect y="4.5" width="8" height="2.5"/><rect y="9" width="8" height="2.5"/></g></svg>
<svg class="a" style="left:294px;top:743px" width="8" height="11"><path d="M7 0 v11 l-7 -5.5z" fill="#7a7b80"/></svg>
<div class="a" style="left:314px;top:745px;width:389px;height:6px;background:#808184;border-radius:3px"></div>
<svg class="a" style="left:1406px;top:743px" width="8" height="11"><path d="M0 0 v11 l7 -5.5z" fill="#7a7b80"/></svg>
<div class="a" style="left:1428px;top:747px;width:96px;height:2px;background:#8a8b8f"></div>
<div class="a" style="left:1427px;top:744px;width:7px;height:7px;border-radius:50%;background:#8a8b8f"></div>
<div class="a" style="left:1441px;top:742px;width:4px;height:12px;border-radius:2px;background:#8a8b8f"></div>
<div class="a" style="left:1518px;top:742px;width:11px;height:11px;border-radius:50%;background:#8a8b8f"></div>
<svg class="a" style="left:1547px;top:739px" width="10" height="19"><g fill="#8a8b8f"><rect x="2" y="0" width="8" height="3"/><rect x="2" y="5" width="8" height="3"/><rect x="-2" y="13" width="4" height="2"/><rect x="-2" y="16" width="4" height="2"/></g></svg>

<!-- vertical scrollbar -->
<div class="a" style="left:1540px;top:43px;width:17px;height:695px;background:#26272b"></div>
<svg class="a" style="left:1542px;top:85px" width="13" height="9"><path d="M0 9 L6.5 1 L13 9z" fill="#8a8b8f"/></svg>
<div class="a" style="left:1545px;top:113px;width:8px;height:595px;background:#808184;border-radius:4px"></div>
<svg class="a" style="left:1542px;top:718px" width="13" height="9"><path d="M0 0 L6.5 8 L13 0z" fill="#8a8b8f"/></svg>
</div></body></html>
